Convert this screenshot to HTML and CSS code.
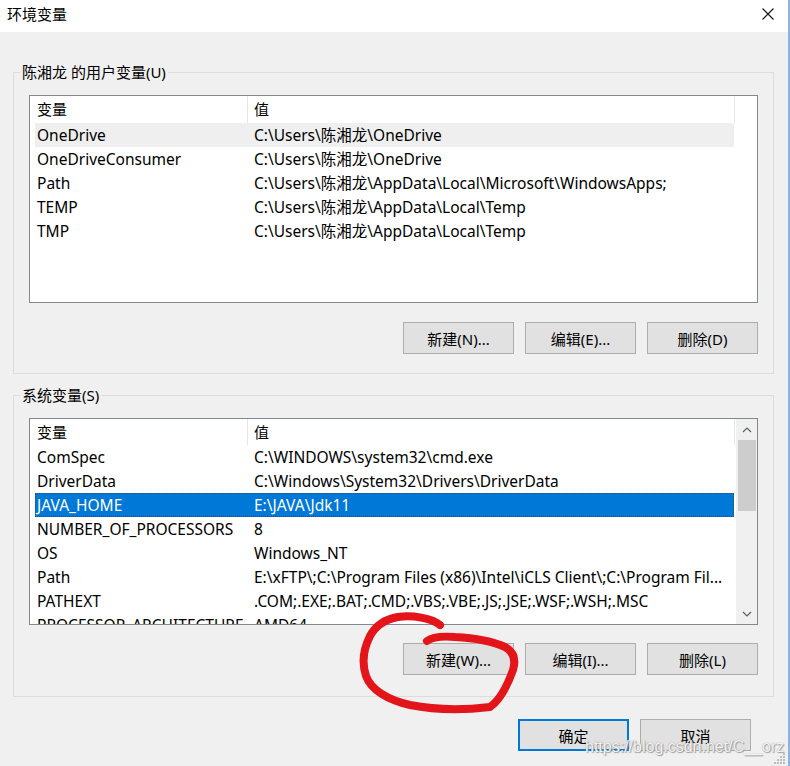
FILE: index.html
```html
<!DOCTYPE html>
<html lang="zh-CN">
<head>
<meta charset="utf-8">
<title>环境变量</title>
<link rel="stylesheet" href="styles.css">
</head>
<body>
<div class="window">
  <div class="titlebar">
    <span class="title">环境变量</span>
    <svg class="close" width="12" height="12" viewBox="0 0 12 12"><path d="M0.5 0.5 L11.5 11.5 M11.5 0.5 L0.5 11.5" stroke="#111" stroke-width="1.1" fill="none"/></svg>
  </div>
  <div class="client">
    <fieldset class="group">
      <legend>陈湘龙 的用户变量(U)</legend>
      <div class="group-body">
        <div class="list">
          <div class="list-main">
            <div class="list-head"><div class="hc1">变量</div><div class="hc2">值</div></div>
            <div class="row hover"><span class="rc1">OneDrive</span><span class="rc2">C:\Users\陈湘龙\OneDrive</span></div>
            <div class="row"><span class="rc1">OneDriveConsumer</span><span class="rc2">C:\Users\陈湘龙\OneDrive</span></div>
            <div class="row"><span class="rc1">Path</span><span class="rc2">C:\Users\陈湘龙\AppData\Local\Microsoft\WindowsApps;</span></div>
            <div class="row"><span class="rc1">TEMP</span><span class="rc2">C:\Users\陈湘龙\AppData\Local\Temp</span></div>
            <div class="row"><span class="rc1">TMP</span><span class="rc2">C:\Users\陈湘龙\AppData\Local\Temp</span></div>
          </div>
        </div>
        <div class="btnrow">
          <button class="btn">新建(N)...</button>
          <button class="btn">编辑(E)...</button>
          <button class="btn">删除(D)</button>
        </div>
      </div>
    </fieldset>

    <fieldset class="group group-sys">
      <legend>系统变量(S)</legend>
      <div class="group-body">
        <div class="list list-sys">
          <div class="list-main">
            <div class="list-head"><div class="hc1">变量</div><div class="hc2">值</div></div>
            <div class="row"><span class="rc1">ComSpec</span><span class="rc2">C:\WINDOWS\system32\cmd.exe</span></div>
            <div class="row"><span class="rc1">DriverData</span><span class="rc2">C:\Windows\System32\Drivers\DriverData</span></div>
            <div class="row selected"><span class="rc1">JAVA_HOME</span><span class="rc2">E:\JAVA\Jdk11</span></div>
            <div class="row"><span class="rc1">NUMBER_OF_PROCESSORS</span><span class="rc2">8</span></div>
            <div class="row"><span class="rc1">OS</span><span class="rc2">Windows_NT</span></div>
            <div class="row"><span class="rc1">Path</span><span class="rc2">E:\xFTP\;C:\Program Files (x86)\Intel\iCLS Client\;C:\Program Fil...</span></div>
            <div class="row"><span class="rc1">PATHEXT</span><span class="rc2">.COM;.EXE;.BAT;.CMD;.VBS;.VBE;.JS;.JSE;.WSF;.WSH;.MSC</span></div>
            <div class="row"><span class="rc1">PROCESSOR_ARCHITECTURE</span><span class="rc2">AMD64</span></div>
          </div>
          <div class="scrollbar">
            <div class="sb-btn"><svg width="10" height="6" viewBox="0 0 10 6"><path d="M1 5 L5 1 L9 5" stroke="#606060" stroke-width="1.2" fill="none"/></svg></div>
            <div class="sb-thumb"></div>
            <div class="sb-track"></div>
            <div class="sb-btn"><svg width="10" height="6" viewBox="0 0 10 6"><path d="M1 1 L5 5 L9 1" stroke="#606060" stroke-width="1.2" fill="none"/></svg></div>
          </div>
        </div>
        <div class="btnrow btnrow-sys">
          <button class="btn">新建(W)...</button>
          <button class="btn">编辑(I)...</button>
          <button class="btn">删除(L)</button>
        </div>
      </div>
    </fieldset>

    <div class="dialog-buttons">
      <button class="btn primary">确定</button>
      <button class="btn">取消</button>
    </div>
  </div>

  <svg class="scribble" width="790" height="766" viewBox="0 0 790 766">
    <path d="M440 625 C432 618 412 615 398 617 C386 619 376 625 370 636 C363 650 362 664 366 676 C371 690 388 700 410 705 C435 710 465 710 490 707 C500 700 508 684 513 670 C516 660 514 652 505 647 C492 641 475 638 455 637 C442 636 432 637 427 641" stroke="#e3151b" stroke-width="8" stroke-linecap="round" stroke-linejoin="round" fill="none"/>
  </svg>

  <div class="watermark">https://blog.csdn.net/C__orz</div>

  <svg class="grip" width="12" height="12" viewBox="0 0 12 12">
    <rect x="9" y="1" width="2" height="2" fill="#bdbdbd"/>
    <rect x="6" y="4" width="2" height="2" fill="#bdbdbd"/>
    <rect x="9" y="4" width="2" height="2" fill="#bdbdbd"/>
    <rect x="3" y="7" width="2" height="2" fill="#bdbdbd"/>
    <rect x="6" y="7" width="2" height="2" fill="#bdbdbd"/>
    <rect x="9" y="7" width="2" height="2" fill="#bdbdbd"/>
    <rect x="0" y="10" width="2" height="2" fill="#bdbdbd"/>
    <rect x="3" y="10" width="2" height="2" fill="#bdbdbd"/>
    <rect x="6" y="10" width="2" height="2" fill="#bdbdbd"/>
    <rect x="9" y="10" width="2" height="2" fill="#bdbdbd"/>
  </svg>
</div>
</body>
</html>
```

FILE: styles.css
```css
* { box-sizing: border-box; }

html, body {
  margin: 0;
  padding: 0;
  background: #ffffff;
}

body {
  font-family: "Noto Sans", "Noto Sans CJK SC", sans-serif;
  font-size: 15px;
  color: #000;
}

.window {
  position: relative;
  width: 790px;
  height: 766px;
  border-right: 2px solid #8db3de;
  display: flex;
  flex-direction: column;
  overflow: hidden;
}

.titlebar {
  height: 32px;
  flex: none;
  background: #fff;
  display: flex;
  align-items: center;
  justify-content: space-between;
  padding: 0 14px 4px 7px;
}

.title {
  font-size: 15px;
  line-height: 20px;
}

.close {
  display: block;
  margin-bottom: 1px;
}

.client {
  flex: 1;
  background: #f0f0f0;
  padding: 30px 14px 0 13px;
}

.group {
  margin: 0;
  padding: 0;
  min-width: 0;
  border: 1px solid #dcdcdc;
}

.group legend {
  margin-left: 6px;
  padding: 0 2px;
  font-size: 15px;
  line-height: 20px;
}

.group-sys {
  margin-top: 11px;
}

.group-body {
  padding: 13px 15px 19px 15px;
}

.group-sys .group-body {
  padding-bottom: 21px;
}

.list {
  height: 208px;
  border: 1px solid #828790;
  background: #fff;
  display: flex;
}

.list-sys {
  height: 207px;
}

.list-main {
  flex: 1;
  overflow: hidden;
  min-width: 0;
}

.list-head {
  display: flex;
  height: 27px;
  line-height: 27px;
}

.list-sys .list-head {
  height: 26px;
  line-height: 26px;
}

.hc1 {
  width: 218px;
  padding-left: 7px;
  border-right: 1px solid #e5e5e5;
}

.hc2 {
  width: 487px;
  padding-left: 6px;
  border-right: 1px solid #e5e5e5;
}

.row {
  display: flex;
  width: 699px;
  height: 24px;
  line-height: 24px;
  margin-left: 5px;
  white-space: nowrap;
  font-size: 15.5px;
}

.row.hover {
  background: #efefef;
}

.row.selected {
  background: #0078d7;
  color: #fff;
  outline: 1px dotted #2b4f77;
  outline-offset: -1px;
}

.rc1 {
  width: 212px;
  padding-left: 2px;
  overflow: hidden;
}

.rc2 {
  flex: 1;
  padding-left: 7px;
  overflow: hidden;
}

.scrollbar {
  width: 21px;
  flex: none;
  background: #f0f0f0;
  display: flex;
  flex-direction: column;
}

.sb-btn {
  height: 21px;
  display: flex;
  align-items: center;
  justify-content: center;
}

.sb-thumb {
  height: 71px;
  margin: 0 1px 0 2px;
  background: #cdcdcd;
}

.sb-track {
  flex: 1;
}

.btnrow {
  display: flex;
  justify-content: flex-end;
  gap: 11px;
  margin-top: 19px;
}

.btnrow-sys {
  margin-top: 18px;
}

.btn {
  width: 111px;
  height: 32px;
  padding: 0;
  margin: 0;
  background: #e1e1e1;
  border: 1px solid #adadad;
  font-family: "Noto Sans", "Noto Sans CJK SC", sans-serif;
  font-size: 15px;
  color: #000;
}

.btn.primary {
  border: 2px solid #0078d7;
}

.dialog-buttons {
  display: flex;
  justify-content: flex-end;
  gap: 11px;
  margin-top: 22px;
  margin-right: 23px;
}

.scribble {
  position: absolute;
  left: 0;
  top: 0;
  pointer-events: none;
}

.watermark {
  position: absolute;
  left: 585px;
  top: 738px;
  font-family: "Liberation Sans", Arial, sans-serif;
  font-size: 16px;
  line-height: 18px;
  color: rgba(255, 255, 255, 0.9);
  text-shadow: 0 0 1px #8a8a8a, 1px 1px 1px #a0a0a0;
  white-space: nowrap;
}

.grip {
  position: absolute;
  right: 2px;
  bottom: 2px;
}
```
